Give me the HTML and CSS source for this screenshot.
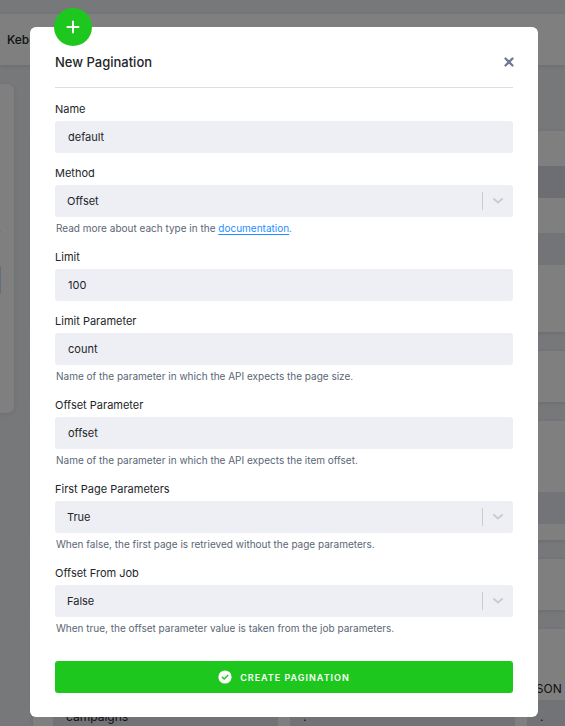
FILE: index.html
```html
<!DOCTYPE html>
<html lang="en">
<head>
    <meta charset="UTF-8">
    <meta name="viewport" content="width=device-width, initial-scale=1">
    <title>New Pagination</title>
    <link rel="stylesheet" href="styles.css">
</head>
<body>
    <div class="page" aria-hidden="true">
        <div class="topbar">Keboola</div>
        <div class="layout">
            <div class="sidebar">
                <div class="sidebar-item"></div>
                <div class="sidebar-item active"></div>
                <div class="sidebar-item"></div>
            </div>
            <div class="content">
                <div class="panel">
                    <div class="space"></div>
                    <div class="band dark"></div>
                    <div class="space"></div>
                    <div class="band"></div>
                    <div class="space tall"></div>
                </div>
                <div class="panel"><div class="space medium"></div></div>
                <div class="panel">
                    <div class="space large"></div>
                    <div class="band"></div>
                    <div class="space small"></div>
                </div>
                <div class="panel"><div class="space medium"></div></div>
                <div class="panel">
                    <div class="mapping-head">
                        <span></span>
                        <span></span>
                        <span>JSON Path</span>
                    </div>
                    <div class="mapping-row">
                        <span>campaigns</span>
                        <span>.</span>
                        <span>.</span>
                    </div>
                </div>
            </div>
        </div>
    </div>

    <div class="backdrop">
        <form class="modal" role="dialog" aria-labelledby="modal-title">
            <span class="modal-icon">
                <svg width="14" height="14" viewBox="0 0 14 14" fill="none" stroke="#fff" stroke-width="2" stroke-linecap="round">
                    <path d="M7 1.5v11M1.5 7h11"/>
                </svg>
            </span>
            <div class="modal-header">
                <h1 id="modal-title">New Pagination</h1>
                <button type="button" class="close-btn" aria-label="Close">
                    <svg width="10" height="10" viewBox="0 0 10 10" fill="none" stroke="#6d7a92" stroke-width="2.3" stroke-linecap="round">
                        <path d="M1.5 1.5l7 7M8.5 1.5l-7 7"/>
                    </svg>
                </button>
            </div>
            <div class="modal-body">
                <div class="field">
                    <label for="name">Name</label>
                    <input type="text" id="name" value="default">
                </div>
                <div class="field">
                    <label for="method">Method</label>
                    <div class="select">
                        <select id="method"><option>Offset</option></select>
                        <span class="select-arrow"><svg width="10" height="6" viewBox="0 0 10 6"><path d="M1 1l4 3.6L9 1"/></svg></span>
                    </div>
                    <p class="help">Read more about each type in the <a href="#">documentation</a>.</p>
                </div>
                <div class="field">
                    <label for="limit">Limit</label>
                    <input type="text" id="limit" value="100">
                </div>
                <div class="field">
                    <label for="limit-param">Limit Parameter</label>
                    <input type="text" id="limit-param" value="count">
                    <p class="help">Name of the parameter in which the API expects the page size.</p>
                </div>
                <div class="field">
                    <label for="offset-param">Offset Parameter</label>
                    <input type="text" id="offset-param" value="offset">
                    <p class="help">Name of the parameter in which the API expects the item offset.</p>
                </div>
                <div class="field">
                    <label for="first-page">First Page Parameters</label>
                    <div class="select">
                        <select id="first-page"><option>True</option><option>False</option></select>
                        <span class="select-arrow"><svg width="10" height="6" viewBox="0 0 10 6"><path d="M1 1l4 3.6L9 1"/></svg></span>
                    </div>
                    <p class="help">When false, the first page is retrieved without the page parameters.</p>
                </div>
                <div class="field">
                    <label for="from-job">Offset From Job</label>
                    <div class="select">
                        <select id="from-job"><option>False</option><option>True</option></select>
                        <span class="select-arrow"><svg width="10" height="6" viewBox="0 0 10 6"><path d="M1 1l4 3.6L9 1"/></svg></span>
                    </div>
                    <p class="help">When true, the offset parameter value is taken from the job parameters.</p>
                </div>
            </div>
            <button type="submit" class="submit-btn">
                <svg width="14" height="14" viewBox="0 0 14 14">
                    <circle cx="7" cy="7" r="6.6" fill="#fff"/>
                    <path d="M4.3 7.2l1.9 1.8 3.5-3.6" fill="none" stroke="#1ec71e" stroke-width="1.5" stroke-linecap="round" stroke-linejoin="round"/>
                </svg>
                Create Pagination
            </button>
        </form>
    </div>
</body>
</html>
```
FILE: styles.css
```css
* {
    box-sizing: border-box;
}
body {
    margin: 0;
    font-family: Inter, "Liberation Sans", sans-serif;
    font-size: 11px;
    color: #222529;
    background-color: #edf0f5;
}

/* page behind the dialog */
.page {
    height: 100vh;
    padding-top: 14px;
    overflow: hidden;
}
.topbar {
    height: 51px;
    padding-left: 7px;
    font-size: 12px;
    line-height: 51px;
    font-weight: 500;
    background-color: #fff;
    box-shadow: 0 1px 4px rgba(0,0,0,0.12);
}
.layout {
    display: flex;
    align-items: flex-start;
    gap: 19px;
}
.sidebar {
    flex: 0 0 14px;
    height: 329px;
    margin-top: 19px;
    padding-top: 147px;
    background-color: #fff;
    border-radius: 0 6px 6px 0;
    box-shadow: 0 1px 4px rgba(0,0,0,0.1);
}
.sidebar-item {
    width: 1px;
    height: 35px;
    border-top: 1px solid #e0e4ea;
}
.sidebar-item.active {
    height: 27px;
    background-color: #c8dcff;
}
.content {
    flex: 0 0 740px;
    display: flex;
    flex-direction: column;
    gap: 19px;
    margin-top: 66px;
}
.panel {
    background-color: #fff;
    box-shadow: 0 1px 4px rgba(0,0,0,0.12);
}
.space {
    height: 35px;
}
.space.small {
    height: 16px;
}
.space.medium {
    height: 51px;
}
.space.tall {
    height: 67px;
}
.space.large {
    height: 71px;
}
.band {
    height: 32px;
    background-color: #e6e9f0;
}
.band.dark {
    background-color: #d8dde6;
}
.mapping-head,
.mapping-row {
    display: grid;
    grid-template-columns: repeat(3, 225px);
    gap: 12px;
    padding-left: 20px;
    font-size: 12px;
}
.mapping-head {
    height: 71px;
    padding-top: 52px;
}
.mapping-head span {
    padding-left: 2px;
}
.mapping-row span {
    height: 36px;
    padding-left: 13px;
    line-height: 34px;
    background-color: #e2e6ee;
}

/* dialog */
.backdrop {
    position: fixed;
    inset: 0;
    padding: 27px 27px 9px 30px;
    overflow: hidden;
    background-color: rgba(0,0,0,0.5);
}
.modal {
    position: relative;
    padding: 25px 25px 24px;
    background-color: #fff;
    border-radius: 6px;
}
.modal-icon {
    position: absolute;
    top: -19px;
    left: 24px;
    display: flex;
    align-items: center;
    justify-content: center;
    width: 38px;
    height: 38px;
    border-radius: 50%;
    background-color: #1ec71e;
}
.modal-header {
    display: flex;
    align-items: center;
    justify-content: space-between;
    padding-bottom: 15px;
    border-bottom: 1px solid #dcdee2;
}
.modal-header h1 {
    margin: 0;
    font-size: 13px;
    font-weight: 500;
    line-height: 20px;
}
.close-btn {
    display: flex;
    padding: 0;
    margin-right: -1px;
    border: none;
    background: none;
    cursor: pointer;
}
.modal-body {
    padding: 13px 0 12px;
}
.field {
    margin-bottom: 12px;
}
.field label {
    display: block;
    margin-bottom: 4px;
    line-height: 16px;
}
.field input,
.field select {
    display: block;
    width: 100%;
    height: 32px;
    padding: 0 13px;
    border: none;
    border-radius: 3px;
    font: inherit;
    color: inherit;
    background-color: #edeff4;
}
.field select {
    padding-left: 12px;
    appearance: none;
}
.select {
    position: relative;
}
.select-arrow {
    position: absolute;
    top: 7px;
    right: 0;
    display: flex;
    align-items: center;
    justify-content: center;
    width: 31px;
    height: 18px;
    border-left: 1px solid #ccc;
    pointer-events: none;
}
.select-arrow path {
    fill: none;
    stroke: #ccc;
    stroke-width: 2;
    stroke-linecap: round;
    stroke-linejoin: round;
}
.help {
    margin: 3px 0 0;
    padding-left: 1px;
    font-size: 10px;
    line-height: 17px;
    color: #5a6675;
}
.help a {
    color: #1f8fff;
    text-underline-offset: 2px;
}
.submit-btn {
    display: flex;
    align-items: center;
    justify-content: center;
    gap: 8px;
    width: 100%;
    height: 32px;
    border: none;
    border-radius: 3px;
    font-family: inherit;
    font-size: 9px;
    font-weight: 600;
    letter-spacing: 1px;
    text-transform: uppercase;
    color: #fff;
    background-color: #1ec71e;
    cursor: pointer;
}
```
